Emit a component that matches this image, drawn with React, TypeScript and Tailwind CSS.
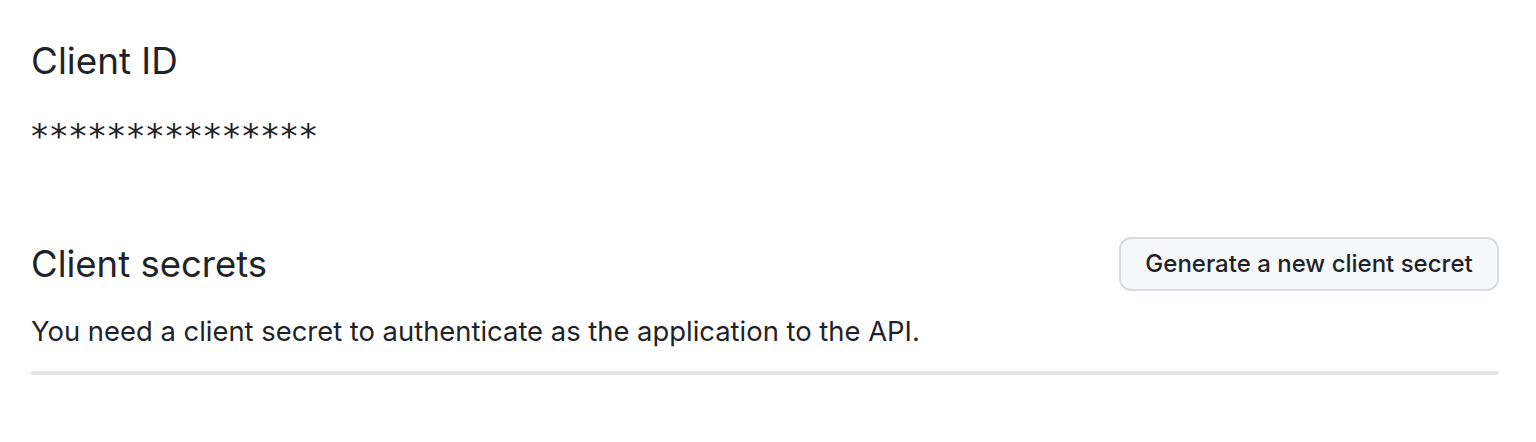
import React from "react";

export default function App() {
  return (
    <div
      className="min-h-[442px] bg-white pl-[31px] pr-[37px] pt-[41px] text-[#1f2328]"
      style={{ fontFamily: 'Inter, "Liberation Sans", Arial, sans-serif' }}
    >
      <h2 className="text-[36.8px] leading-[40px] font-normal">Client ID</h2>
      <div
        className="mt-[29px] h-[40px] flex items-center text-[34px] tracking-[2.2px] leading-[40px]"
        style={{ fontFamily: '"DejaVu Sans", sans-serif' }}
      >
        <span className="relative top-[6px]">***************</span>
      </div>
      <div className="mt-[87px] flex items-center justify-between h-[54px]">
        <h2 className="text-[36.5px] leading-[40px] font-normal">Client secrets</h2>
        <button className="h-[54px] w-[380px] rounded-[12px] border-2 border-[#d8dce0] bg-[#f6f8fa] text-[24px] font-medium text-[#1f2328]">
          Generate a new client secret
        </button>
      </div>
      <p className="mt-[22px] text-[27.4px] leading-[36px]">
        You need a client secret to authenticate as the application to the API.
      </p>
      <div className="mt-[22px] h-[4px] rounded-full bg-[#e3e5e8]" />
    </div>
  );
}
